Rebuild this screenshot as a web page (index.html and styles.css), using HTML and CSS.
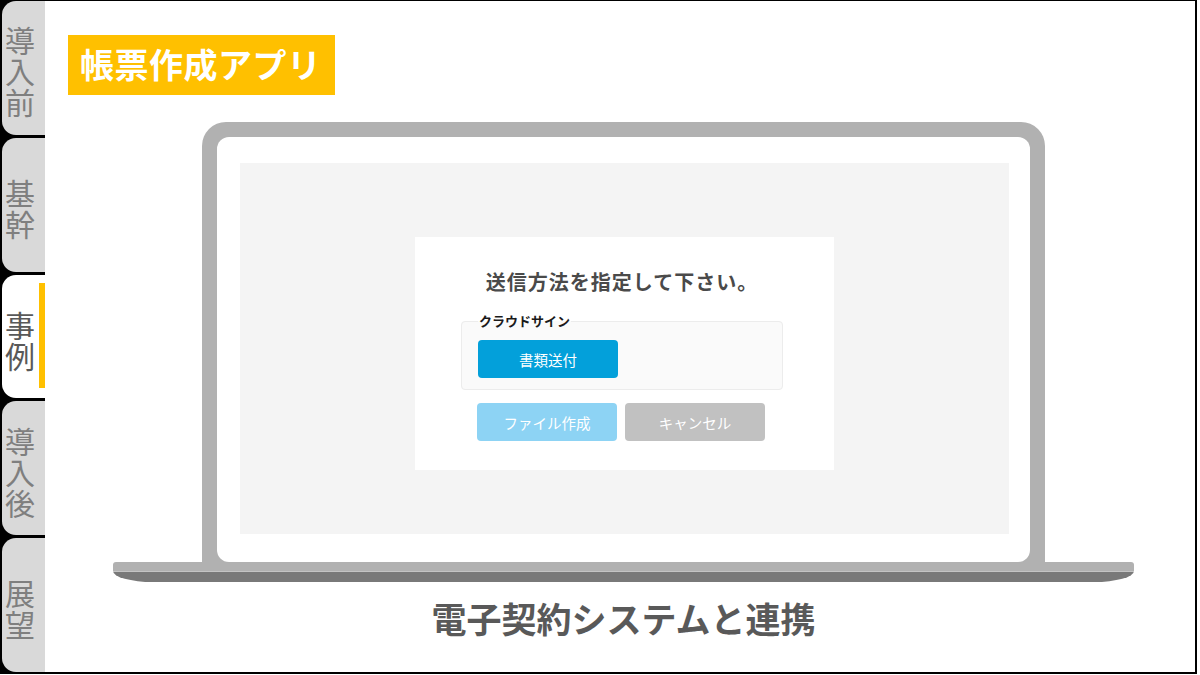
FILE: index.html
```html
<!DOCTYPE html>
<html lang="ja">
<head>
  <meta charset="UTF-8">
  <meta name="viewport" content="width=device-width, initial-scale=1.0">
  <title>帳票作成アプリ</title>
  <link rel="stylesheet" href="styles.css">
</head>
<body>
  <div class="frame">
    <nav class="tabs">
      <div class="tab"><span class="tab-label">導入前</span></div>
      <div class="tab"><span class="tab-label">基幹</span></div>
      <div class="tab active"><span class="tab-label">事例</span><span class="tab-mark"></span></div>
      <div class="tab"><span class="tab-label">導入後</span></div>
      <div class="tab"><span class="tab-label">展望</span></div>
    </nav>

    <main class="slide">
      <h1 class="badge">帳票作成アプリ</h1>

      <div class="laptop">
        <div class="lid">
          <div class="bezel">
            <div class="screen">
              <div class="dialog">
                <h2 class="dialog-title">送信方法を指定して下さい。</h2>
                <fieldset class="group">
                  <legend>クラウドサイン</legend>
                  <button class="btn btn-send" type="button">書類送付</button>
                </fieldset>
                <div class="actions">
                  <button class="btn btn-file" type="button">ファイル作成</button>
                  <button class="btn btn-cancel" type="button">キャンセル</button>
                </div>
              </div>
            </div>
          </div>
        </div>
        <div class="base">
          <div class="base-top"></div>
          <div class="base-bottom"></div>
        </div>
      </div>

      <p class="caption">電子契約システムと連携</p>
    </main>
  </div>
</body>
</html>
```

FILE: styles.css
```css
body {
  margin: 0;
  background: #fff;
  font-family: 'Noto Sans CJK JP', 'Noto Sans', sans-serif;
}

.frame {
  width: 1197px;
  height: 674px;
  box-sizing: border-box;
  padding: 1px 2px 2px 2px;
  background: #000;
  display: flex;
}

/* side tabs */
.tabs {
  width: 43px;
  display: flex;
  flex-direction: column;
  gap: 3px;
}

.tab {
  flex: 1;
  display: flex;
  align-items: center;
  padding: 10px 0 0 0;
  background: #d9d9d9;
  border-radius: 14px 0 0 14px;
  color: #7f7f7f;
}

.tab-label {
  writing-mode: vertical-rl;
  text-orientation: upright;
  font-size: 30px;
  line-height: 36px;
  letter-spacing: 1px;
}

.tab.active {
  background: #fff;
  color: #595959;
  padding-top: 0;
}

.tab.active .tab-label {
  margin-top: 12px;
}

.tab-mark {
  align-self: stretch;
  width: 6px;
  margin: 8px 0 10px auto;
  background: #ffc000;
}

/* slide */
.slide {
  flex: 1;
  background: #fff;
  padding: 34px 3px 0 10px;
  display: flex;
  flex-direction: column;
}

.badge {
  align-self: flex-start;
  margin: 0 0 0 13px;
  padding: 0 13px 0 12px;
  height: 60px;
  line-height: 58px;
  background: #ffc000;
  color: #fff;
  font-size: 34px;
  letter-spacing: 0.5px;
  font-weight: 700;
}

.laptop {
  align-self: center;
  width: 1021px;
  margin-top: 27px;
}

.lid {
  width: 843px;
  margin: 0 auto;
  padding: 15px 15px 0;
  box-sizing: border-box;
  background: #b1b1b1;
  border-radius: 24px 24px 0 0;
}

.bezel {
  height: 425px;
  box-sizing: border-box;
  padding: 26px 21px 28px 23px;
  background: #fff;
  border-radius: 12px;
}

.screen {
  height: 100%;
  box-sizing: border-box;
  padding-top: 74px;
  background: #f4f4f4;
  display: flex;
  flex-direction: column;
  align-items: center;
}

.base-top {
  height: 9px;
  background: #b1b1b1;
  border-radius: 3px 3px 0 0;
}

.base-bottom {
  height: 10px;
  border-top: 1px solid #c4c4c4;
  background: #797979;
  border-radius: 0 0 40px 40px / 0 0 11px 11px;
}

/* dialog */
.dialog {
  width: 419px;
  box-sizing: border-box;
  padding: 31px 51px 29px 46px;
  background: #fff;
}

.dialog-title {
  margin: 0;
  text-align: center;
  font-size: 20px;
  line-height: 28px;
  letter-spacing: 1px;
  font-weight: 700;
  color: #4a4a4a;
}

.group {
  margin: 16px 0 0;
  padding: 10px 16px 11px;
  border: 1px solid #ececec;
  border-radius: 4px;
  background: #fafafa;
}

.group legend {
  padding: 0 1px;
  font-size: 13px;
  line-height: 18px;
  font-weight: 700;
  color: #1a1a1a;
}

.actions {
  display: flex;
  gap: 8px;
  margin-top: 13px;
  padding-left: 16px;
}

.btn {
  width: 140px;
  height: 38px;
  border: none;
  border-radius: 4px;
  color: #fff;
  font-family: inherit;
  font-size: 14.5px;
  padding: 0;
}

.btn-send {
  display: block;
  background: #03a0da;
}

.btn-file {
  background: #8dd3f4;
}

.btn-cancel {
  background: #c1c1c1;
}

.caption {
  margin: 15px 0 0;
  text-align: center;
  font-size: 35px;
  line-height: 41px;
  font-weight: 700;
  color: #595959;
}
```
